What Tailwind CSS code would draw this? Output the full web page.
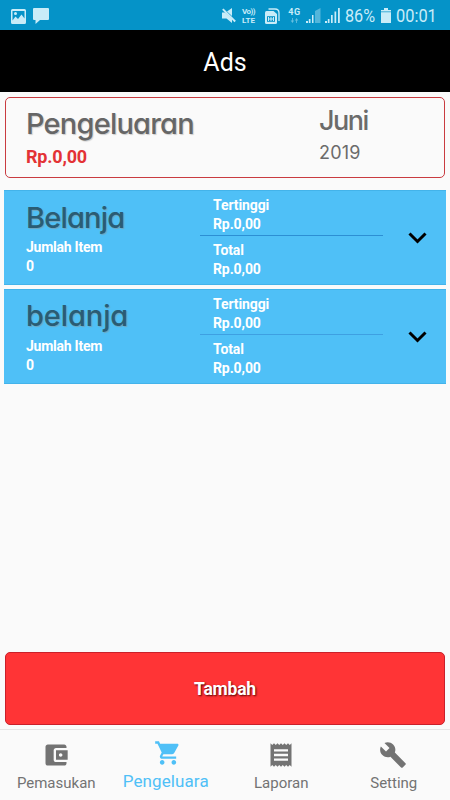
<!DOCTYPE html>
<html lang="id">
<head>
    <meta charset="UTF-8">
    <meta name="viewport" content="width=device-width, initial-scale=1.0">
    <title>Ads</title>
    <script src="https://cdn.jsdelivr.net/npm/@tailwindcss/browser@4"></script>
</head>
<body class="bg-[#fafafa] font-['Roboto',sans-serif]">
    <div class="w-[450px] h-[800px] flex flex-col overflow-hidden">
        <!-- Status bar -->
        <div class="h-[30px] shrink-0 bg-[#0593c8] text-[#c9ecf8] flex items-center pl-[11px] pr-[12px]">
            <svg class="w-[15px] h-[15px] mt-[2px]" viewBox="0 0 15 15" fill="currentColor">
                <path fill-rule="evenodd" d="M1.500 0h12A1.500 1.500 0 0 1 15 1.500v12a1.500 1.500 0 0 1-1.500 1.500h-12A1.500 1.500 0 0 1 0 13.500v-12A1.500 1.500 0 0 1 1.500 0zM1.500 2v9.500l3-4 2.500 2.500 3.500-4.500 3 4V2zM3 4.500a1.500 1.500 0 1 0 3 0 1.500 1.500 0 1 0-3 0z"/>
            </svg>
            <svg class="w-[16px] h-[16px] ml-[7px] mt-[2px]" viewBox="0 0 16 16" fill="currentColor">
                <path d="M1 0h14a1 1 0 0 1 1 1v10a1 1 0 0 1-1 1H7l-4.500 4V12H1a1 1 0 0 1-1-1V1a1 1 0 0 1 1-1z"/>
            </svg>
            <div class="ml-auto flex items-center">
                <svg class="w-[14px] h-[15px] mt-[1px]" viewBox="0 0 14 15" fill="currentColor">
                    <path d="M0 4.500h3L10 11v4L4.500 10.500H0zM5 3.500L10 0v8z"/>
                    <path d="M.8 1.200L13.200 13.500" stroke="currentColor" stroke-width="1.900"/>
                </svg>
                <div class="ml-[6px] mt-[2px] w-[17px] text-[8px] leading-[8px] font-bold whitespace-nowrap">
                    <div class="h-[9px] tracking-[-0.5px]">Vo))</div>
                    <div class="h-[8px]">LTE</div>
                </div>
                <svg class="w-[15px] h-[16px] ml-[6px] mt-[1px]" viewBox="0 0 15 16">
                    <path d="M3.500 1h6.500q4 0 4 4v8" fill="none" stroke="currentColor" stroke-width="1.300"/>
                    <path d="M1.500 3H8.500L12 6v8.500q0 1.500-1.500 1.500h-9Q0 16 0 14.500v-10Q0 3 1.500 3z" fill="currentColor"/>
                    <path d="M2 8.200h8v5.600h-8z" fill="#0593c8"/>
                    <path d="M3.500 9v4M6 9v4M8.500 9v4M3.500 11h5" fill="none" stroke="currentColor"/>
                </svg>
                <div class="ml-[8px] mt-px w-[13px] flex flex-col items-center">
                    <span class="text-[9px] leading-[9px] font-bold tracking-[0.5px]">4G</span>
                    <svg class="w-[9px] h-[5px] mt-px opacity-50" viewBox="0 0 9 6" fill="currentColor">
                        <path d="M1.500 0h1v3H4L2 6 0 3h1.500zM6.500 6h1V3H9L7 0 5 3h1.500z"/>
                    </svg>
                </div>
                <svg class="w-[15px] h-[15px] ml-[5px] mt-[1px]" viewBox="0 0 15 15" fill="currentColor">
                    <path d="M0 13h2v2H0zM2.800 11h1.700v4H2.800zM6 7h1.500v8H6z"/>
                    <path opacity=".4" d="M9 3l5.500-3v15H9z"/>
                </svg>
                <svg class="w-[15px] h-[15px] ml-[4px] mt-[1px]" viewBox="0 0 15 15" fill="currentColor">
                    <path d="M0 13h2v2H0zM2.800 11h1.700v4H2.800zM6 7h1.700v8H6zM9.500 3.500h1.700V15H9.500zM13 0h1.800v15H13z"/>
                </svg>
                <span class="ml-[5px] mt-[2px] w-[32px] text-[18px] leading-[20px] whitespace-nowrap"><span class="inline-block origin-left scale-x-[0.9]">86%</span></span>
                <svg class="w-[10px] h-[15px] ml-[4px] mt-[1px]" viewBox="0 0 10 15" fill="currentColor">
                    <path d="M3 0h4v2h3v13H0V2h3z"/>
                    <path d="M0 3.800h10" stroke="#0593c8" stroke-width=".7"/>
                </svg>
                <span class="ml-[5px] mt-[2px] w-[42px] text-[18px] leading-[20px] whitespace-nowrap"><span class="inline-block origin-left scale-x-[0.91]">00:01</span></span>
            </div>
        </div>

        <!-- Title bar -->
        <div class="h-[62px] shrink-0 bg-black text-white flex items-center justify-center text-[25px] pt-[4px]">Ads</div>

        <!-- Monthly summary -->
        <div class="mt-[5px] mx-[5px] h-[81px] shrink-0 border border-[#c93b40] rounded-[5px] flex pl-[20px]">
            <div class="w-[293px]">
                <div class="mt-[8px] h-[36px] leading-[36px] text-[29px] font-medium text-[#666] tracking-[-0.8px] [font-family:'Inter',sans-serif] [font-feature-settings:'cv11'] [text-shadow:1px_1px_1px_#ccc]">Pengeluaran</div>
                <div class="mt-[5px] h-[20px] leading-[20px] text-[18px] font-bold text-[#e33235] tracking-[-0.2px]">Rp.0,00</div>
            </div>
            <div class="[font-family:'Inter',sans-serif] text-[#6b6b6b]">
                <div class="mt-[5px] h-[36px] leading-[36px] text-[27px] font-medium tracking-[-1.500px]">Juni</div>
                <div class="mt-[4px] h-[20px] leading-[20px] text-[18px] tracking-[0.2px]">2019</div>
            </div>
        </div>

        <!-- Expense list -->
        <div class="mt-[12px] mx-[4px] shrink-0 flex flex-col gap-[4px] text-white text-[14px] leading-[19px] font-bold tracking-[-0.1px]">
            <div class="h-[95px] bg-[#4fc0f7] border-y border-[#43b3ea] flex">
                <div class="w-[196px] pl-[22px] pt-[7px]">
                    <div class="h-[40px] leading-[39px] text-[29px] font-medium text-[#2a5c74] tracking-[-0.8px] [font-family:'Inter',sans-serif] [font-feature-settings:'cv11'] [text-shadow:1px_1px_1px_#6fa5bd]">Belanja</div>
                    <div class="tracking-[-0.25px]">Jumlah Item</div>
                    <div>0</div>
                </div>
                <div class="w-[183px] pt-[5px]">
                    <div class="h-[40px] pl-[13px] border-b border-[#2c8fd4]">
                        <div>Tertinggi</div>
                        <div>Rp.0,00</div>
                    </div>
                    <div class="pl-[13px] pt-[5px]">
                        <div>Total</div>
                        <div>Rp.0,00</div>
                    </div>
                </div>
                <svg class="w-[19px] h-[12px] ml-[24.500px] mt-[41px]" viewBox="0 0 19 12" fill="none" stroke="#000" stroke-width="3">
                    <path d="M1.500 1.500l8 8 8-8"/>
                </svg>
            </div>
            <div class="h-[95px] bg-[#4fc0f7] border-y border-[#43b3ea] flex">
                <div class="w-[196px] pl-[22px] pt-[6px]">
                    <div class="h-[41px] leading-[39px] text-[29px] font-medium text-[#2a5c74] [font-family:'Inter',sans-serif] [font-feature-settings:'cv11'] [text-shadow:1px_1px_1px_#6fa5bd]">belanja</div>
                    <div class="tracking-[-0.25px]">Jumlah Item</div>
                    <div>0</div>
                </div>
                <div class="w-[183px] pt-[5px]">
                    <div class="h-[40px] pl-[13px] border-b border-[#3ea0e2]">
                        <div>Tertinggi</div>
                        <div>Rp.0,00</div>
                    </div>
                    <div class="pl-[13px] pt-[5px]">
                        <div>Total</div>
                        <div>Rp.0,00</div>
                    </div>
                </div>
                <svg class="w-[19px] h-[12px] ml-[24.500px] mt-[41px]" viewBox="0 0 19 12" fill="none" stroke="#000" stroke-width="3">
                    <path d="M1.500 1.500l8 8 8-8"/>
                </svg>
            </div>
        </div>

        <!-- Add button -->
        <button class="mt-auto mx-[5px] h-[73px] shrink-0 rounded-[5px] border border-[#c9202a] bg-[#ff3436] text-white text-[17.500px] tracking-[-0.2px] pt-[2px] font-bold [text-shadow:1px_1px_2px_#500]">Tambah</button>

        <!-- Bottom navigation -->
        <div class="mt-[4px] h-[71px] shrink-0 border-t border-[#e6e6e6] grid grid-cols-4 text-center text-[#737373] text-[15px] leading-[20px]">
            <div class="flex flex-col items-center pt-[11px]">
                <svg class="w-[28px] h-[28px]" viewBox="0 0 24 24" fill="currentColor">
                    <path d="M21 18v1c0 1.100-.9 2-2 2H5c-1.110 0-2-.9-2-2V5c0-1.100.890-2 2-2h14c1.100 0 2 .9 2 2v1h-9c-1.110 0-2 .9-2 2v8c0 1.100.890 2 2 2h9zm-9-2h10V8H12v8zm4-2.500c-.830 0-1.500-.670-1.500-1.500s.670-1.500 1.500-1.500 1.500.670 1.500 1.500-.670 1.500-1.500 1.500z"/>
                </svg>
                <span class="mt-[4px]">Pemasukan</span>
            </div>
            <div class="flex flex-col items-center pt-[9px] text-[#4fc0f7]">
                <svg class="w-[28px] h-[28px] -ml-[2px]" viewBox="0 0 24 24" fill="currentColor">
                    <path d="M7 18c-1.100 0-1.990.9-1.990 2S5.900 22 7 22s2-.9 2-2-.9-2-2-2zM1 2v2h2l3.600 7.590-1.350 2.450c-.160.280-.250.610-.250.960 0 1.100.9 2 2 2h12v-2H7.420c-.140 0-.250-.110-.250-.250l.030-.120.9-1.630h7.450c.750 0 1.410-.410 1.750-1.030l3.580-6.490c.080-.140.120-.310.120-.480 0-.550-.450-1-1-1H5.210l-.940-2H1zm16 16c-1.100 0-1.990.9-1.990 2s.890 2 1.990 2 2-.9 2-2-.9-2-2-2z"/>
                </svg>
                <span class="mt-[4px] text-[17px] tracking-[0.1px] -ml-[6px]">Pengeluara</span>
            </div>
            <div class="flex flex-col items-center pt-[11px]">
                <svg class="w-[28px] h-[28px]" viewBox="0 0 24 24" fill="currentColor">
                    <path d="M18 17H6v-2h12v2zm0-4H6v-2h12v2zm0-4H6V7h12v2zM3 22l1.500-1.500L6 22l1.500-1.500L9 22l1.500-1.500L12 22l1.500-1.500L15 22l1.500-1.500L18 22l1.500-1.500L21 22V2l-1.500 1.500L18 2l-1.500 1.500L15 2l-1.500 1.500L12 2l-1.500 1.500L9 2 7.500 3.500 6 2 4.500 3.500 3 2v20z"/>
                </svg>
                <span class="mt-[4px]">Laporan</span>
            </div>
            <div class="flex flex-col items-center pt-[11px]">
                <svg class="w-[28px] h-[28px] -ml-[1px]" viewBox="0 0 24 24" fill="currentColor">
                    <path d="M22.700 19l-9.100-9.100c.9-2.300.4-5-1.500-6.900-2-2-5-2.400-7.400-1.300L9 6 6 9 1.600 4.700C.4 7.100.9 10.100 2.900 12.100c1.900 1.900 4.600 2.400 6.900 1.500l9.100 9.100c.4.4 1 .4 1.400 0l2.300-2.300c.5-.4.5-1.100.1-1.400z"/>
                </svg>
                <span class="mt-[4px]">Setting</span>
            </div>
        </div>
    </div>
</body>
</html>
